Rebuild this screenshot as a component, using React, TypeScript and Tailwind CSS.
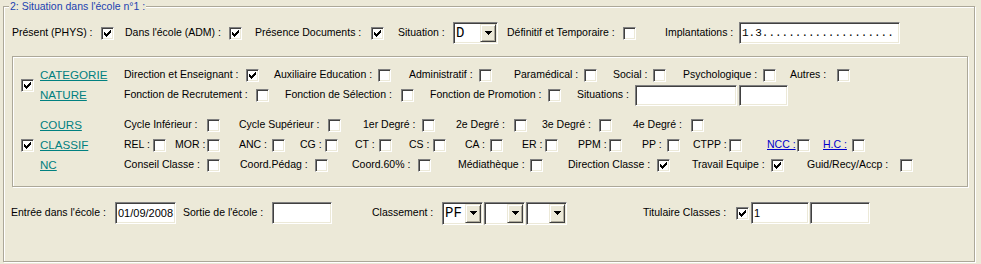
import React from "react";

const SUNKEN =
  "border border-t-[#808080] border-l-[#808080] border-r-white border-b-white shadow-[inset_1px_1px_0_#404040,inset_-1px_-1px_0_#ECE9D8]";
const RAISED =
  "border border-t-[#ECE9D8] border-l-[#ECE9D8] border-r-[#404040] border-b-[#404040] shadow-[inset_1px_1px_0_#fff,inset_-1px_-1px_0_#ACA899]";
const ETCHED =
  "border border-[#ACA899] shadow-[inset_1px_1px_0_#fff,1px_1px_0_#fff]";

function Check({ checked = false }: { checked?: boolean }) {
  return (
    <span
      className={`flex items-center justify-center w-[13px] h-[13px] shrink-0 bg-white ${SUNKEN}`}
    >
      {checked && (
        <svg width="7" height="7" viewBox="0 0 7 7" shapeRendering="crispEdges">
          <path
            d="M6 0h1v1h-1z M5 1h2v1h-2z M0 2h1v1h-1z M4 2h3v1h-3z M0 3h2v1h-2z M3 3h3v1h-3z M0 4h5v1h-5z M1 5h3v1h-3z M2 6h1v1h-1z"
            fill="#000"
          />
        </svg>
      )}
    </span>
  );
}

function CbItem({
  label,
  w = "",
  lw,
  checked,
  link,
}: {
  label: string;
  w?: string;
  lw: string;
  checked?: boolean;
  link?: boolean;
}) {
  return (
    <div className={`flex items-center shrink-0 ${w}`}>
      <span
        className={`whitespace-nowrap shrink-0 ${lw} ${
          link ? "text-[#0000CC]" : ""
        }`}
      >
        {link ? <span className="underline">{label}</span> : label}
      </span>
      <Check checked={checked} />
    </div>
  );
}

function Arrow() {
  return (
    <svg width="7" height="4" viewBox="0 0 7 4" shapeRendering="crispEdges">
      <path d="M0 0h7v1h-7z M1 1h5v1h-5z M2 2h3v1h-3z M3 3h1v1h-1z" fill="#000" />
    </svg>
  );
}

function Select({ value, w, h }: { value: string; w: string; h: string }) {
  return (
    <div className={`flex shrink-0 bg-white p-[1px] ${SUNKEN} ${w} ${h}`}>
      <div className="flex-1 flex items-center pl-[1px] font-['Liberation_Mono','Courier_New',monospace] text-[14px] leading-none text-black overflow-hidden">
        {value}
      </div>
      <div
        className={`w-[16px] shrink-0 flex items-center justify-center bg-[#ECE9D8] ${RAISED}`}
      >
        <Arrow />
      </div>
    </div>
  );
}

function Field({
  w,
  h = "h-[22px]",
  children,
  mono,
}: {
  w: string;
  h?: string;
  children?: React.ReactNode;
  mono?: boolean;
}) {
  return (
    <div
      className={`flex items-center shrink-0 bg-white pl-[2px] overflow-hidden whitespace-nowrap ${SUNKEN} ${w} ${h} ${
        mono ? "font-['Liberation_Mono','Courier_New',monospace] text-[11px]" : "text-[11px]"
      }`}
    >
      {children}
    </div>
  );
}

function LinkRow({ text }: { text: string }) {
  return (
    <div className="h-[20px] flex items-center">
      <span className="underline text-[#008080] text-[11.6px]">{text}</span>
    </div>
  );
}

export default function App() {
  return (
    <div className="w-[981px] h-[264px] bg-[#ECE9D8] overflow-hidden pt-[6px] pl-[3px] font-['Liberation_Sans',Arial,sans-serif] text-[10.5px] text-black">
      <div className={`relative w-[972px] h-[256px] pl-[8px] pt-[15px] flex flex-col ${ETCHED}`}>
        <span className="absolute left-[5px] -top-[7px] px-[1px] bg-[#ECE9D8] leading-[13px] text-[#2142B0] whitespace-nowrap">
          2: Situation dans l'école n°1 :
        </span>

        {/* Row 1 */}
        <div className="flex items-center h-[22px]">
          <CbItem label="Présent (PHYS) :" w="w-[113px]" lw="w-[89px]" checked />
          <CbItem label="Dans l'école (ADM) :" w="w-[130px]" lw="w-[104px]" checked />
          <CbItem label="Présence Documents :" w="w-[143px]" lw="w-[116px]" checked />
          <div className="flex items-center shrink-0 w-[109px]">
            <span className="w-[55px] shrink-0 whitespace-nowrap">Situation :</span>
            <Select value="D" w="w-[45px]" h="h-[22px]" />
          </div>
          <CbItem label="Définitif et Temporaire :" w="w-[158px]" lw="w-[116px]" />
          <div className="flex items-center shrink-0">
            <span className="w-[74px] shrink-0 whitespace-nowrap">Implantations :</span>
            <Field w="w-[161px]" mono>
              1.3....................
            </Field>
          </div>
        </div>

        {/* Inner group */}
        <div className={`mt-[12px] w-[956px] h-[131px] pl-[8px] pt-[8px] flex flex-col ${ETCHED}`}>
          {/* Section A */}
          <div className="flex items-center">
            <Check checked />
            <div className="ml-[6px] w-[84px] shrink-0 flex flex-col">
              <LinkRow text="CATEGORIE" />
              <LinkRow text="NATURE" />
            </div>
            <div className="flex flex-col">
              <div className="h-[20px] flex items-center">
                <CbItem label="Direction et Enseignant :" w="w-[150px]" lw="w-[122px]" checked />
                <CbItem label="Auxiliaire Education :" w="w-[135px]" lw="w-[104px]" />
                <CbItem label="Administratif :" w="w-[105px]" lw="w-[70px]" />
                <CbItem label="Paramédical :" w="w-[99px]" lw="w-[70px]" />
                <CbItem label="Social :" w="w-[70px]" lw="w-[40px]" />
                <CbItem label="Psychologique :" w="w-[107px]" lw="w-[80px]" />
                <CbItem label="Autres :" lw="w-[47px]" />
              </div>
              <div className="h-[20px] flex items-center">
                <CbItem label="Fonction de Recrutement :" w="w-[161px]" lw="w-[132px]" />
                <CbItem label="Fonction de Sélection :" w="w-[145px]" lw="w-[116px]" />
                <CbItem label="Fonction de Promotion :" w="w-[147px]" lw="w-[118px]" />
                <div className="flex items-center shrink-0">
                  <span className="w-[58px] shrink-0 whitespace-nowrap">Situations :</span>
                  <Field w="w-[102px]" h="h-[21px]" />
                  <div className="w-[2px]" />
                  <Field w="w-[49px]" h="h-[21px]" />
                </div>
              </div>
            </div>
          </div>

          {/* Section B */}
          <div className="mt-[10px] flex items-center">
            <Check checked />
            <div className="ml-[6px] w-[84px] shrink-0 flex flex-col">
              <LinkRow text="COURS" />
              <LinkRow text="CLASSIF" />
              <LinkRow text="NC" />
            </div>
            <div className="flex flex-col">
              <div className="h-[20px] flex items-center">
                <CbItem label="Cycle Inférieur :" w="w-[115px]" lw="w-[83px]" />
                <CbItem label="Cycle Supérieur :" w="w-[124px]" lw="w-[89px]" />
                <CbItem label="1er Degré :" w="w-[93px]" lw="w-[59px]" />
                <CbItem label="2e Degré :" w="w-[86px]" lw="w-[58px]" />
                <CbItem label="3e Degré :" w="w-[91px]" lw="w-[57px]" />
                <CbItem label="4e Degré :" lw="w-[58px]" />
              </div>
              <div className="h-[20px] flex items-center">
                <CbItem label="REL :" w="w-[51px]" lw="w-[29px]" />
                <CbItem label="MOR :" w="w-[64px]" lw="w-[32px]" />
                <CbItem label="ANC :" w="w-[61px]" lw="w-[33px]" />
                <CbItem label="CG :" w="w-[55px]" lw="w-[25px]" />
                <CbItem label="CT :" w="w-[54px]" lw="w-[24px]" />
                <CbItem label="CS :" w="w-[56px]" lw="w-[24px]" />
                <CbItem label="CA :" w="w-[57px]" lw="w-[25px]" />
                <CbItem label="ER :" w="w-[56px]" lw="w-[23px]" />
                <CbItem label="PPM :" w="w-[64px]" lw="w-[31px]" />
                <CbItem label="PP :" w="w-[51px]" lw="w-[25px]" />
                <CbItem label="CTPP :" w="w-[74px]" lw="w-[36px]" />
                <CbItem label="NCC :" w="w-[56px]" lw="w-[30px]" link />
                <CbItem label="H.C :" lw="w-[29px]" link />
              </div>
              <div className="h-[20px] flex items-center">
                <CbItem label="Conseil Classe :" w="w-[116px]" lw="w-[83px]" />
                <CbItem label="Coord.Pédag :" w="w-[112px]" lw="w-[75px]" />
                <CbItem label="Coord.60% :" w="w-[106px]" lw="w-[66px]" />
                <CbItem label="Médiathèque :" w="w-[110px]" lw="w-[72px]" />
                <CbItem label="Direction Classe :" w="w-[124px]" lw="w-[89px]" checked />
                <CbItem label="Travail Equipe :" w="w-[115px]" lw="w-[79px]" checked />
                <CbItem label="Guid/Recy/Accp :" lw="w-[93px]" />
              </div>
            </div>
          </div>
        </div>

        {/* Bottom row */}
        <div className="mt-[14px] -ml-[1px] flex items-center h-[24px]">
          <div className="flex items-center shrink-0 w-[172px]">
            <span className="w-[104px] shrink-0 whitespace-nowrap">Entrée dans l'école :</span>
            <Field w="w-[61px]">01/09/2008</Field>
          </div>
          <div className="flex items-center shrink-0 w-[189px]">
            <span className="w-[89px] shrink-0 whitespace-nowrap">Sortie de l'école :</span>
            <Field w="w-[60px]" />
          </div>
          <div className="flex items-center shrink-0 w-[271px]">
            <span className="w-[70px] shrink-0 whitespace-nowrap">Classement :</span>
            <Select value="PF" w="w-[41px]" h="h-[23px]" />
            <div className="w-[1px]" />
            <Select value="" w="w-[41px]" h="h-[23px]" />
            <div className="w-[1px]" />
            <Select value="" w="w-[41px]" h="h-[23px]" />
          </div>
          <div className="flex items-center shrink-0">
            <span className="w-[93px] shrink-0 whitespace-nowrap">Titulaire Classes :</span>
            <Check checked />
            <div className="w-[2px]" />
            <Field w="w-[58px]">1</Field>
            <div className="w-[1px]" />
            <Field w="w-[60px]" />
          </div>
        </div>
      </div>
    </div>
  );
}
